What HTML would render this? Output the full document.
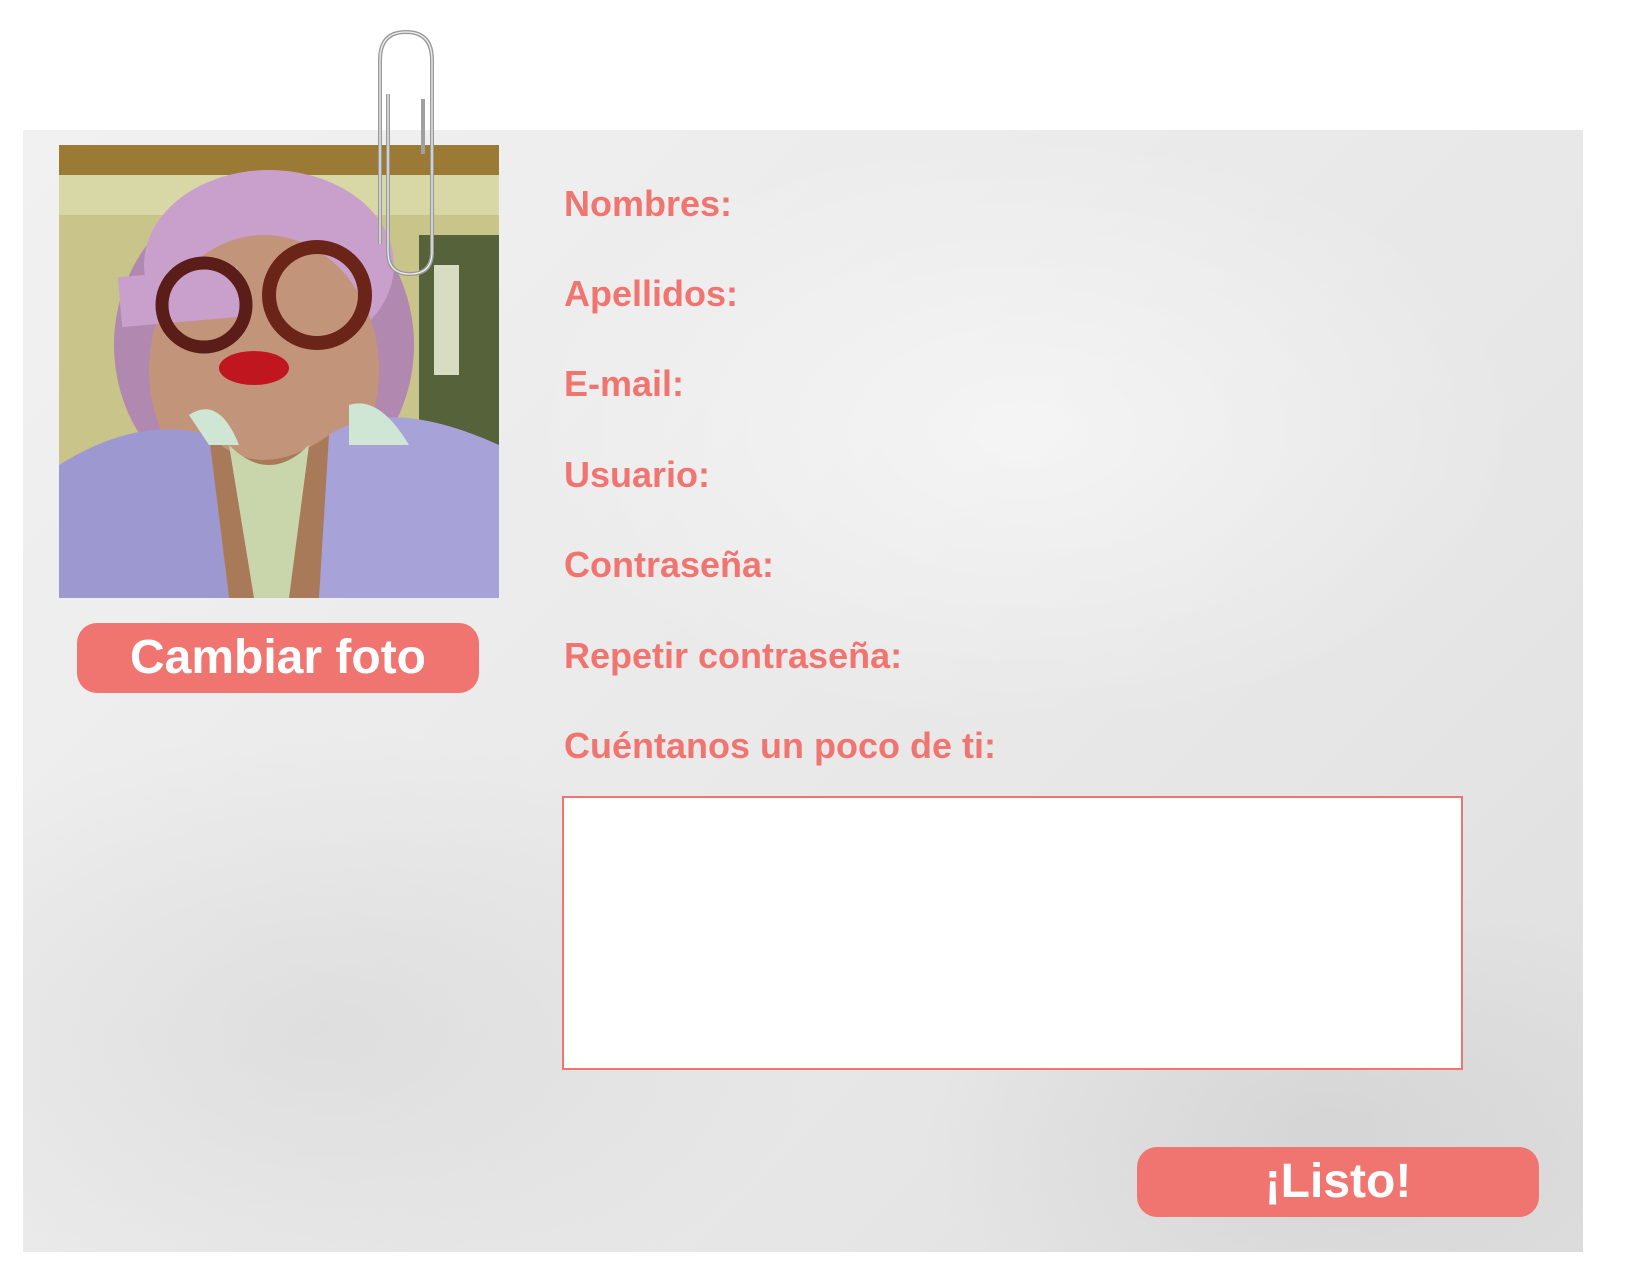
<!DOCTYPE html>
<html><head><meta charset="utf-8"><style>
html,body{margin:0;padding:0;background:#fff;}
body{width:1650px;height:1275px;position:relative;overflow:hidden;font-family:"Liberation Sans",sans-serif;}
.paper{position:absolute;left:23px;top:130px;width:1560px;height:1122px;
background:
radial-gradient(ellipse 500px 300px at 300px 900px,rgba(200,200,200,.35),transparent),
radial-gradient(ellipse 400px 250px at 1300px 1000px,rgba(190,190,190,.35),transparent),
radial-gradient(ellipse 500px 300px at 1000px 300px,rgba(255,255,255,.5),transparent),
linear-gradient(135deg,#f1f1f1 0%,#ebebeb 40%,#e6e6e6 70%,#dedede 100%);}
.lbl{position:absolute;left:564px;color:#f07570;font-size:36px;font-weight:bold;white-space:nowrap;line-height:1;}
.btn{position:absolute;background:#f07570;border-radius:20px;color:#fff;text-align:center;font-weight:bold;}
.ta{position:absolute;left:562px;top:796px;width:901px;height:274px;background:#fff;border:2px solid #f07570;box-sizing:border-box;}
</style></head><body>
<div class="paper"></div>
<svg style="position:absolute;left:59px;top:145px" width="440" height="453" viewBox="0 0 440 453">
<rect width="440" height="453" fill="#c9c58a"/>
<rect width="440" height="40" fill="#9a7a35"/>
<rect y="30" width="440" height="40" fill="#d8d7a6"/>
<rect x="360" y="90" width="80" height="260" fill="#56633a"/>
<rect x="375" y="120" width="25" height="110" fill="#d8dcc0"/>
<ellipse cx="205" cy="200" rx="150" ry="160" fill="#b088b0"/>
<ellipse cx="210" cy="120" rx="125" ry="95" fill="#c9a0cc"/>
<ellipse cx="205" cy="225" rx="115" ry="135" fill="#c2957a"/>
<rect x="60" y="120" width="120" height="50" fill="#c9a0cc" transform="rotate(-5 200 140)"/>
<circle cx="145" cy="160" r="42" fill="none" stroke="#5a1d18" stroke-width="13"/>
<circle cx="258" cy="150" r="48" fill="none" stroke="#6a2418" stroke-width="14"/>
<ellipse cx="195" cy="223" rx="35" ry="17" fill="#c0161f"/>
<path d="M0 320 Q80 270 150 290 L170 453 L0 453Z" fill="#9d98d0"/>
<path d="M440 300 Q330 250 270 290 L250 453 L440 453Z" fill="#a7a2d8"/>
<path d="M150 290 Q200 340 270 290 L260 453 L170 453Z" fill="#a87a5a"/>
<path d="M170 300 Q210 340 250 300 L230 453 L195 453Z" fill="#c9d6ac"/>
<path d="M130 270 Q160 250 180 300 L150 300Z M290 260 Q320 250 350 300 L290 300Z" fill="#cfe6d4"/>
</svg>
<svg style="position:absolute;left:370px;top:24px" width="72" height="256" viewBox="0 0 72 256">
<path d="M10 220 L10 36 Q10 8 36 8 Q62 8 62 36 L62 228 Q62 250 40 250 Q18 250 18 228 L18 70" fill="none" stroke="#9a9a9a" stroke-width="4"/>
<path d="M10 220 L10 36 Q10 8 36 8 Q62 8 62 36 L62 228 Q62 250 40 250 Q18 250 18 228 L18 70" fill="none" stroke="#eee" stroke-width="1.3"/>
<path d="M53 75 L53 130" stroke="#a0a0a0" stroke-width="4"/>
</svg>
<div class="lbl" style="top:186px">Nombres:</div>
<div class="lbl" style="top:276px">Apellidos:</div>
<div class="lbl" style="top:366px">E-mail:</div>
<div class="lbl" style="top:457px">Usuario:</div>
<div class="lbl" style="top:547px">Contraseña:</div>
<div class="lbl" style="top:638px">Repetir contraseña:</div>
<div class="lbl" style="top:728px">Cuéntanos un poco de ti:</div>
<div class="ta"></div>
<div class="btn" style="left:77px;top:623px;width:402px;height:70px;font-size:48px;line-height:70px">Cambiar foto</div>
<div class="btn" style="left:1137px;top:1147px;width:402px;height:70px;font-size:48px;line-height:70px">¡Listo!</div>
</body></html>
